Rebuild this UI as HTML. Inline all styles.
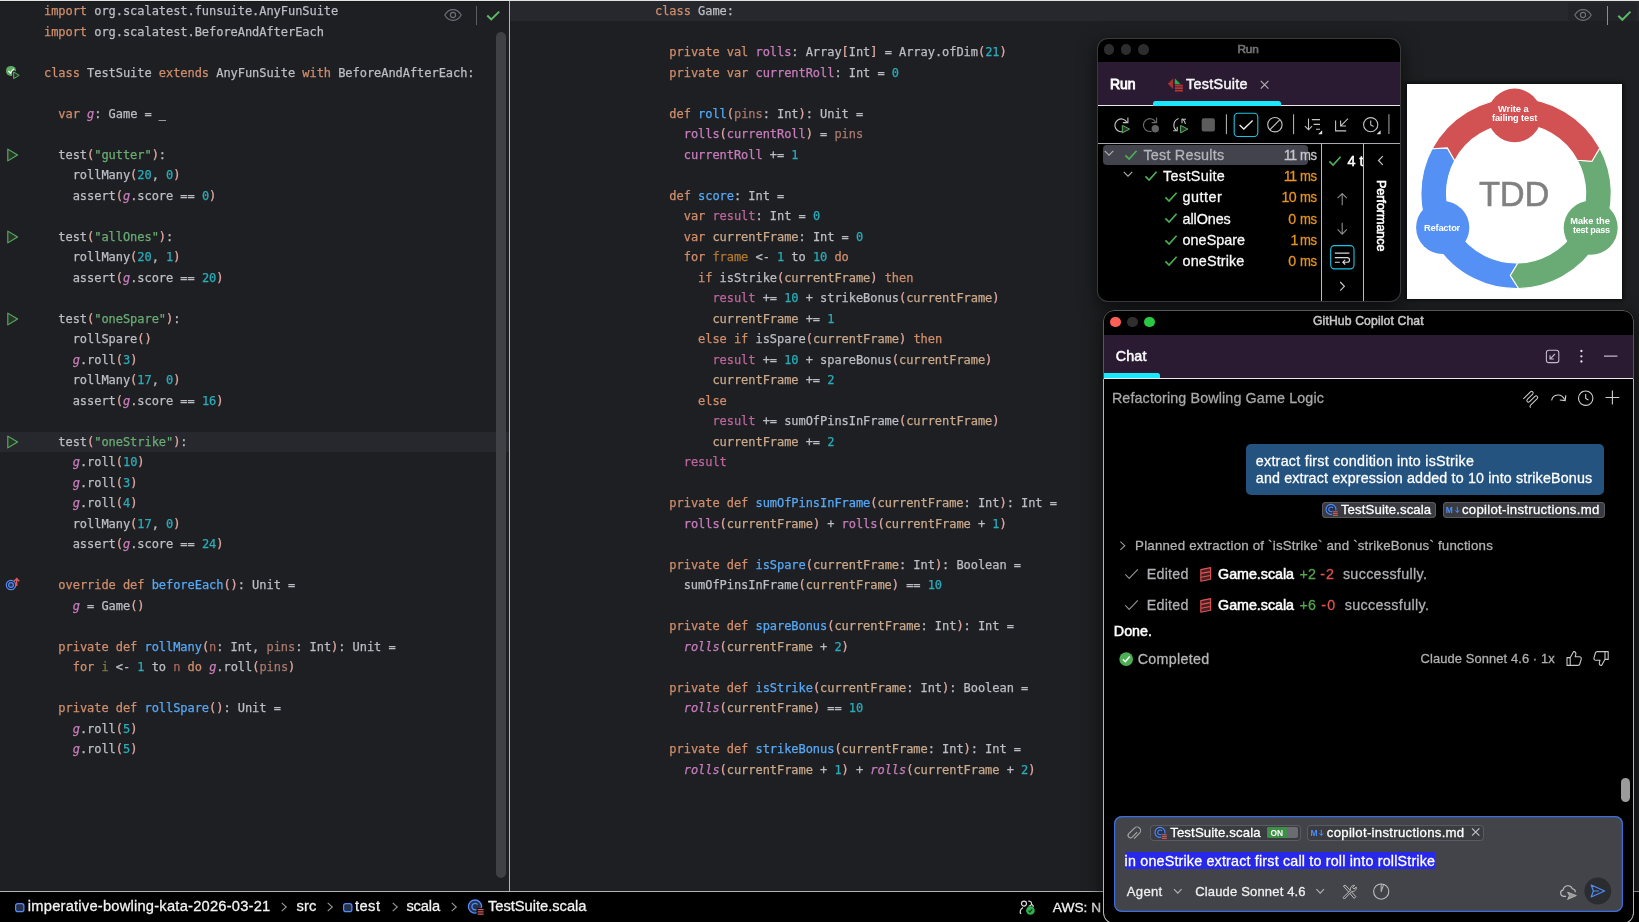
<!DOCTYPE html>
<html lang="en"><head><meta charset="utf-8"><title>imperative-bowling-kata – TestSuite.scala</title>
<style>
html,body{margin:0;padding:0}
body{width:1639px;height:922px;overflow:hidden;background:#1e1f22;position:relative;font-family:'Liberation Sans',sans-serif}
.abs,.t,svg.ic{position:absolute}
.t{white-space:pre;display:block;-webkit-text-stroke:0.28px}
.code{position:absolute;font:12px/20.5px 'DejaVu Sans Mono','Liberation Mono',monospace;letter-spacing:-0.05px;color:#bcbec4;white-space:pre;-webkit-text-stroke:0.25px}
.code .ln{height:20.5px}
.code i{font-style:normal}
.code .k{color:#cf8e6d}.code .s{color:#6aab73}.code .n{color:#2aacb8}.code .f{color:#56a8f5}
.code .m{color:#c77dbb}.code .mi{color:#c77dbb;font-style:italic}.code .p{color:#e0a9a3}
.code .vp{color:#a9796d}.code .vn{color:#a9695e}.code .vi{color:#807a3c}
.code .vr{color:#bd669c}.code .vc{color:#c9a98c}.code .vf{color:#b07a2e}
#root{position:absolute;left:0;top:0;width:1639px;height:922px;overflow:hidden;will-change:transform}
</style></head><body><div id="root">
<div class="abs" style="left:0;top:0;width:1639px;height:1px;background:#e4e4e4"></div>
<div class="abs" style="left:0;top:1px;width:1639px;height:1px;background:#141517;opacity:.6"></div>
<div class="abs" style="left:0;top:431.5px;width:509px;height:20.5px;background:#26282e"></div>
<div class="code" style="left:44px;top:1.3px"><div class="ln"><i class="k">import</i> org.scalatest.funsuite.AnyFunSuite</div><div class="ln"><i class="k">import</i> org.scalatest.BeforeAndAfterEach</div><div class="ln">&nbsp;</div><div class="ln"><i class="k">class</i> TestSuite <i class="k">extends</i> AnyFunSuite <i class="k">with</i> BeforeAndAfterEach:</div><div class="ln">&nbsp;</div><div class="ln">  <i class="k">var</i> <i class="mi">g</i>: Game = _</div><div class="ln">&nbsp;</div><div class="ln">  test<i class="p">(</i><i class="s">&quot;gutter&quot;</i><i class="p">)</i>:</div><div class="ln">    rollMany<i class="p">(</i><i class="n">20</i>, <i class="n">0</i><i class="p">)</i></div><div class="ln">    assert<i class="p">(</i><i class="mi">g</i>.score == <i class="n">0</i><i class="p">)</i></div><div class="ln">&nbsp;</div><div class="ln">  test<i class="p">(</i><i class="s">&quot;allOnes&quot;</i><i class="p">)</i>:</div><div class="ln">    rollMany<i class="p">(</i><i class="n">20</i>, <i class="n">1</i><i class="p">)</i></div><div class="ln">    assert<i class="p">(</i><i class="mi">g</i>.score == <i class="n">20</i><i class="p">)</i></div><div class="ln">&nbsp;</div><div class="ln">  test<i class="p">(</i><i class="s">&quot;oneSpare&quot;</i><i class="p">)</i>:</div><div class="ln">    rollSpare<i class="p">()</i></div><div class="ln">    <i class="mi">g</i>.roll<i class="p">(</i><i class="n">3</i><i class="p">)</i></div><div class="ln">    rollMany<i class="p">(</i><i class="n">17</i>, <i class="n">0</i><i class="p">)</i></div><div class="ln">    assert<i class="p">(</i><i class="mi">g</i>.score == <i class="n">16</i><i class="p">)</i></div><div class="ln">&nbsp;</div><div class="ln">  test<i class="p">(</i><i class="s">&quot;oneStrike&quot;</i><i class="p">)</i>:</div><div class="ln">    <i class="mi">g</i>.roll<i class="p">(</i><i class="n">10</i><i class="p">)</i></div><div class="ln">    <i class="mi">g</i>.roll<i class="p">(</i><i class="n">3</i><i class="p">)</i></div><div class="ln">    <i class="mi">g</i>.roll<i class="p">(</i><i class="n">4</i><i class="p">)</i></div><div class="ln">    rollMany<i class="p">(</i><i class="n">17</i>, <i class="n">0</i><i class="p">)</i></div><div class="ln">    assert<i class="p">(</i><i class="mi">g</i>.score == <i class="n">24</i><i class="p">)</i></div><div class="ln">&nbsp;</div><div class="ln">  <i class="k">override def</i> <i class="f">beforeEach</i><i class="p">()</i>: Unit =</div><div class="ln">    <i class="mi">g</i> = Game<i class="p">()</i></div><div class="ln">&nbsp;</div><div class="ln">  <i class="k">private def</i> <i class="f">rollMany</i><i class="p">(</i><i class="vn">n</i>: Int, <i class="vp">pins</i>: Int<i class="p">)</i>: Unit =</div><div class="ln">    <i class="k">for</i> <i class="vi">i</i> &lt;- <i class="n">1</i> to <i class="vn">n</i> <i class="k">do</i> <i class="mi">g</i>.roll<i class="p">(</i><i class="vp">pins</i><i class="p">)</i></div><div class="ln">&nbsp;</div><div class="ln">  <i class="k">private def</i> <i class="f">rollSpare</i><i class="p">()</i>: Unit =</div><div class="ln">    <i class="mi">g</i>.roll<i class="p">(</i><i class="n">5</i><i class="p">)</i></div><div class="ln">    <i class="mi">g</i>.roll<i class="p">(</i><i class="n">5</i><i class="p">)</i></div></div>
<svg class="ic" style="left:5px;top:145.75px" width="16" height="18" viewBox="0 0 16 18"><path d="M2.8 3.1L12.6 9L2.8 14.9Z" fill="#253627" stroke="#5fad65" stroke-width="1.1" stroke-linejoin="round"/></svg>
<svg class="ic" style="left:5px;top:227.75px" width="16" height="18" viewBox="0 0 16 18"><path d="M2.8 3.1L12.6 9L2.8 14.9Z" fill="#253627" stroke="#5fad65" stroke-width="1.1" stroke-linejoin="round"/></svg>
<svg class="ic" style="left:5px;top:309.75px" width="16" height="18" viewBox="0 0 16 18"><path d="M2.8 3.1L12.6 9L2.8 14.9Z" fill="#253627" stroke="#5fad65" stroke-width="1.1" stroke-linejoin="round"/></svg>
<svg class="ic" style="left:5px;top:432.75px" width="16" height="18" viewBox="0 0 16 18"><path d="M2.8 3.1L12.6 9L2.8 14.9Z" fill="#253627" stroke="#5fad65" stroke-width="1.1" stroke-linejoin="round"/></svg>
<svg class="ic" style="left:4px;top:62.75px" width="20" height="20" viewBox="0 0 20 20"><circle cx="7" cy="7.9" r="5" fill="#5fad65"/><path d="M4.4 7.9L6.5 10L9.8 5.8" fill="none" stroke="#fff" stroke-width="1.3"/><path d="M9.6 8.9L15.2 12.3L9.6 15.7Z" fill="#1e1f22" stroke="#1e1f22" stroke-width="3" stroke-linejoin="round"/><path d="M9.6 8.9L15.2 12.3L9.6 15.7Z" fill="#253627" stroke="#5fad65" stroke-width="1" stroke-linejoin="round"/></svg>
<svg class="ic" style="left:2px;top:575.25px" width="22" height="20" viewBox="0 0 22 20" fill="none"><circle cx="9" cy="10" r="4.7" stroke="#548af7" stroke-width="1.2"/><circle cx="9" cy="10" r="2.4" stroke="#548af7" stroke-width="1.2" fill="#25324d"/><path d="M14.7 11V4.2M12.2 6.3L14.7 3.6L17.2 6.3" stroke="#db5c5c" stroke-width="1.4" fill="none"/></svg>
<div class="abs" style="left:496px;top:31.5px;width:10px;height:846px;border-radius:5px;background:#404144"></div>
<svg class="ic" style="left:442.6px;top:7.199999999999999px" width="20" height="16" viewBox="-10 -8 20 16" fill="none" stroke="#6e7178" stroke-width="1.1"><path d="M-8.2 0C-6.2-3.6-3.3-5.4 0-5.4S6.2-3.6 8.2 0C6.2 3.6 3.3 5.4 0 5.4S-6.2 3.6-8.2 0Z"/><circle r="2.6"/></svg>
<div class="abs" style="left:476px;top:6px;width:1.4px;height:19px;background:#5b5d63"></div>
<svg class="ic" style="left:485.3px;top:9.2px" width="16.5" height="13" viewBox="-2 -2 16.5 13" fill="none" stroke="#5fb865" stroke-width="2" stroke-linecap="butt" stroke-linejoin="miter"><path d="M0.3 4.50L4.25 8.40L12.20 0.6"/></svg>
<div class="abs" style="left:508.8px;top:1px;width:1.3px;height:890px;background:#b2b2b2"></div>
<div class="abs" style="left:510px;top:1px;width:1129px;height:19.7px;background:#26282e"></div>
<div class="abs" style="left:1568px;top:3px;width:69px;height:18px;background:#222328;border-radius:3px"></div>
<div class="code" style="left:655px;top:1.3px"><div class="ln"><i class="k">class</i> Game:</div><div class="ln">&nbsp;</div><div class="ln">  <i class="k">private val</i> <i class="m">rolls</i>: Array<i class="p">[</i>Int<i class="p">]</i> = Array.ofDim<i class="p">(</i><i class="n">21</i><i class="p">)</i></div><div class="ln">  <i class="k">private var</i> <i class="m">currentRoll</i>: Int = <i class="n">0</i></div><div class="ln">&nbsp;</div><div class="ln">  <i class="k">def</i> <i class="f">roll</i><i class="p">(</i><i class="vp">pins</i>: Int<i class="p">)</i>: Unit =</div><div class="ln">    <i class="m">rolls</i><i class="p">(</i><i class="m">currentRoll</i><i class="p">)</i> = <i class="vp">pins</i></div><div class="ln">    <i class="m">currentRoll</i> += <i class="n">1</i></div><div class="ln">&nbsp;</div><div class="ln">  <i class="k">def</i> <i class="f">score</i>: Int =</div><div class="ln">    <i class="k">var</i> <i class="vr">result</i>: Int = <i class="n">0</i></div><div class="ln">    <i class="k">var</i> <i class="vc">currentFrame</i>: Int = <i class="n">0</i></div><div class="ln">    <i class="k">for</i> <i class="vf">frame</i> &lt;- <i class="n">1</i> to <i class="n">10</i> <i class="k">do</i></div><div class="ln">      <i class="k">if</i> isStrike<i class="p">(</i><i class="vc">currentFrame</i><i class="p">)</i> <i class="k">then</i></div><div class="ln">        <i class="vr">result</i> += <i class="n">10</i> + strikeBonus<i class="p">(</i><i class="vc">currentFrame</i><i class="p">)</i></div><div class="ln">        <i class="vc">currentFrame</i> += <i class="n">1</i></div><div class="ln">      <i class="k">else if</i> isSpare<i class="p">(</i><i class="vc">currentFrame</i><i class="p">)</i> <i class="k">then</i></div><div class="ln">        <i class="vr">result</i> += <i class="n">10</i> + spareBonus<i class="p">(</i><i class="vc">currentFrame</i><i class="p">)</i></div><div class="ln">        <i class="vc">currentFrame</i> += <i class="n">2</i></div><div class="ln">      <i class="k">else</i></div><div class="ln">        <i class="vr">result</i> += sumOfPinsInFrame<i class="p">(</i><i class="vc">currentFrame</i><i class="p">)</i></div><div class="ln">        <i class="vc">currentFrame</i> += <i class="n">2</i></div><div class="ln">    <i class="vr">result</i></div><div class="ln">&nbsp;</div><div class="ln">  <i class="k">private def</i> <i class="f">sumOfPinsInFrame</i><i class="p">(</i><i class="vc">currentFrame</i>: Int<i class="p">)</i>: Int =</div><div class="ln">    <i class="m">rolls</i><i class="p">(</i><i class="vc">currentFrame</i><i class="p">)</i> + <i class="m">rolls</i><i class="p">(</i><i class="vc">currentFrame</i> + <i class="n">1</i><i class="p">)</i></div><div class="ln">&nbsp;</div><div class="ln">  <i class="k">private def</i> <i class="f">isSpare</i><i class="p">(</i><i class="vc">currentFrame</i>: Int<i class="p">)</i>: Boolean =</div><div class="ln">    sumOfPinsInFrame<i class="p">(</i><i class="vc">currentFrame</i><i class="p">)</i> == <i class="n">10</i></div><div class="ln">&nbsp;</div><div class="ln">  <i class="k">private def</i> <i class="f">spareBonus</i><i class="p">(</i><i class="vc">currentFrame</i>: Int<i class="p">)</i>: Int =</div><div class="ln">    <i class="mi">rolls</i><i class="p">(</i><i class="vc">currentFrame</i> + <i class="n">2</i><i class="p">)</i></div><div class="ln">&nbsp;</div><div class="ln">  <i class="k">private def</i> <i class="f">isStrike</i><i class="p">(</i><i class="vc">currentFrame</i>: Int<i class="p">)</i>: Boolean =</div><div class="ln">    <i class="mi">rolls</i><i class="p">(</i><i class="vc">currentFrame</i><i class="p">)</i> == <i class="n">10</i></div><div class="ln">&nbsp;</div><div class="ln">  <i class="k">private def</i> <i class="f">strikeBonus</i><i class="p">(</i><i class="vc">currentFrame</i>: Int<i class="p">)</i>: Int =</div><div class="ln">    <i class="mi">rolls</i><i class="p">(</i><i class="vc">currentFrame</i> + <i class="n">1</i><i class="p">)</i> + <i class="mi">rolls</i><i class="p">(</i><i class="vc">currentFrame</i> + <i class="n">2</i><i class="p">)</i></div></div>
<svg class="ic" style="left:1573.3px;top:7.300000000000001px" width="20" height="16" viewBox="-10 -8 20 16" fill="none" stroke="#6e7178" stroke-width="1.1"><path d="M-8.2 0C-6.2-3.6-3.3-5.4 0-5.4S6.2-3.6 8.2 0C6.2 3.6 3.3 5.4 0 5.4S-6.2 3.6-8.2 0Z"/><circle r="2.6"/></svg>
<div class="abs" style="left:1607px;top:6px;width:1.4px;height:19px;background:#8b8d92"></div>
<svg class="ic" style="left:1615.8px;top:8.8px" width="16.8" height="13.4" viewBox="-2 -2 16.8 13.4" fill="none" stroke="#5fb865" stroke-width="2" stroke-linecap="butt" stroke-linejoin="miter"><path d="M0.3 4.70L4.35 8.80L12.50 0.6"/></svg>
<div class="abs" style="left:0;top:891px;width:1639px;height:31px;background:#000"></div>
<div class="abs" style="left:0;top:891px;width:1639px;height:1px;background:#b4b4b4"></div>
<svg class="ic" style="left:14px;top:902px" width="12" height="12" viewBox="-1 -1 12 12"><rect x="0.6" y="0.6" width="8.3" height="8.0" rx="2.2" fill="#25324d" stroke="#548af7" stroke-width="1.2"/></svg>
<span class="t" style="left:27.80px;top:898.00px;font:normal 14.7px 'Liberation Sans', sans-serif;line-height:16px;letter-spacing:0.223px;color:#f2f2f2;">imperative-bowling-kata-2026-03-21</span>
<svg class="ic" style="left:278px;top:900px" width="12" height="14" viewBox="-6 -7 12 14" fill="none" stroke="#9a9a9a" stroke-width="1.1"><path d="M-2.3 -4.2L2.3 0L-2.3 4.2"/></svg>
<span class="t" style="left:296.40px;top:898.00px;font:normal 14.7px 'Liberation Sans', sans-serif;line-height:16px;letter-spacing:0.169px;color:#f2f2f2;">src</span>
<svg class="ic" style="left:324px;top:900px" width="12" height="14" viewBox="-6 -7 12 14" fill="none" stroke="#9a9a9a" stroke-width="1.1"><path d="M-2.3 -4.2L2.3 0L-2.3 4.2"/></svg>
<svg class="ic" style="left:341.5px;top:902px" width="12" height="12" viewBox="-1 -1 12 12"><rect x="0.6" y="0.6" width="8.3" height="8.0" rx="2.2" fill="#25324d" stroke="#548af7" stroke-width="1.2"/></svg>
<span class="t" style="left:354.90px;top:898.00px;font:normal 14.7px 'Liberation Sans', sans-serif;line-height:16px;letter-spacing:0.478px;color:#f2f2f2;">test</span>
<svg class="ic" style="left:389px;top:900px" width="12" height="14" viewBox="-6 -7 12 14" fill="none" stroke="#9a9a9a" stroke-width="1.1"><path d="M-2.3 -4.2L2.3 0L-2.3 4.2"/></svg>
<span class="t" style="left:406.40px;top:898.00px;font:normal 14.7px 'Liberation Sans', sans-serif;line-height:16px;letter-spacing:-0.139px;color:#f2f2f2;">scala</span>
<svg class="ic" style="left:447.5px;top:900px" width="12" height="14" viewBox="-6 -7 12 14" fill="none" stroke="#9a9a9a" stroke-width="1.1"><path d="M-2.3 -4.2L2.3 0L-2.3 4.2"/></svg>
<svg class="ic" style="left:467.3px;top:898.2px" width="18" height="18" viewBox="0 0 18 18" fill="none"><circle cx="8" cy="8.6" r="6.6" stroke="#548af7" stroke-width="1.3" fill="#25324d"/><path d="M10.6 6.6A3.2 3.2 0 1 0 10.6 10.6" stroke="#548af7" stroke-width="1.3"/><rect x="9.6" y="10.2" width="8" height="7.4" fill="#000"/><path d="M10.6 11.6H16.6M10.6 13.9H16.6M10.6 16.2H16.6" stroke="#db5c5c" stroke-width="1.3"/></svg>
<span class="t" style="left:487.90px;top:898.00px;font:normal 14.7px 'Liberation Sans', sans-serif;line-height:16px;letter-spacing:-0.012px;color:#f2f2f2;">TestSuite.scala</span>
<svg class="ic" style="left:1018px;top:898px" width="20" height="18" viewBox="0 0 20 18" fill="none" stroke="#dcdcdc" stroke-width="1.2"><circle cx="6" cy="5.6" r="2.5"/><path d="M10.2 3.2A2.5 2.5 0 1 1 10.6 8"/><path d="M3 16C1.4 14 2.2 11 5 9.6"/><path d="M13.6 6.2C15 7 15.4 8 15.2 9"/><circle cx="12.4" cy="12.5" r="4.3" fill="#2fb350" stroke="none"/><path d="M10.5 12.6L11.9 14L14.3 11.2" stroke="#0a3d18" stroke-width="1.2"/></svg>
<span class="t" style="left:1052.80px;top:900.00px;font:normal 13.7px 'Liberation Sans', sans-serif;line-height:15px;letter-spacing:0.038px;color:#f2f2f2;">AWS: N</span>
<div class="abs" style="left:1098px;top:38.6px;width:302px;height:262px;border-radius:10px;overflow:hidden;background:#000;box-shadow:0 0 0 1px #3a3a3c,0 6px 18px 2px rgba(0,0,0,.55);"><div class="abs" style="left:-1098px;top:-38.6px;width:1639px;height:922px">
<div class="abs" style="left:1103.9px;top:44.1px;width:10.6px;height:10.6px;background:#2d2d2d;border-radius:50%"></div>
<div class="abs" style="left:1120.9px;top:44.1px;width:10.6px;height:10.6px;background:#2d2d2d;border-radius:50%"></div>
<div class="abs" style="left:1138.1000000000001px;top:44.1px;width:10.6px;height:10.6px;background:#2d2d2d;border-radius:50%"></div>
<span class="t" style="left:1237.40px;top:42.00px;font:normal 11.8px 'Liberation Sans', sans-serif;line-height:14px;letter-spacing:-0.152px;color:#707070;-webkit-text-stroke:0.7px;">Run</span>
<div class="abs" style="left:1098px;top:62px;width:302px;height:43.2px;background:#2a1b33;"></div>
<div class="abs" style="left:1098px;top:105px;width:302px;height:1px;background:#e6e6e6;"></div>
<div class="abs" style="left:1153px;top:100.6px;width:128.2px;height:5px;background:#1be7fa;border-radius:2.5px 2.5px 0 0"></div>
<span class="t" style="left:1109.90px;top:76.00px;font:normal 14.0px 'Liberation Sans', sans-serif;line-height:16px;letter-spacing:0.004px;color:#fff;-webkit-text-stroke:0.85px;">Run</span>
<svg class="ic" style="left:1166px;top:76px" width="19" height="18" viewBox="1166 76 19 18" fill="none" ><path d="M1167.8 83.8L1173.1 78.6V89Z" fill="#a83232"/><path d="M1174.8 78.3L1180.6 84.2H1174.8Z" fill="#2fa84f"/><path d="M1174.9 85.7H1182.9M1174.9 88.2H1182.9M1174.9 90.7H1182.9" stroke="#b73737" stroke-width="1.7"/></svg>
<span class="t" style="left:1186.00px;top:76.00px;font:normal 14.4px 'Liberation Sans', sans-serif;line-height:16px;letter-spacing:0.300px;color:#f8f8f8;-webkit-text-stroke:0.45px;">TestSuite</span>
<svg class="ic" style="left:1259px;top:79px" width="12" height="12" viewBox="1259 79 12 12" fill="none" ><path d="M1260.8 80.9L1268.4 88.7M1268.4 80.9L1260.8 88.7" stroke="#b4b4b4" stroke-width="1.1"/></svg>
<svg class="ic" style="left:1098px;top:106px" width="302" height="38" viewBox="1098 106 302 38" fill="none" ><path d="M1124.3 131A6.4 6.4 0 1 1 1126.9 122.2" stroke="#c4c4c4" stroke-width="1.1"/><path d="M1127.9 117.6V122.6H1122.9" stroke="#c4c4c4" stroke-width="1.1"/><path d="M1122.3 125.4L1129.6 129.1L1122.3 132.8Z" fill="#253627" stroke="#5fad65" stroke-width="1" stroke-linejoin="round"/><path d="M1151.6 131.2A6.4 6.4 0 1 1 1155.6 122.2" stroke="#6c6c6c" stroke-width="1.1"/><path d="M1156.6 117.6V122.6H1151.6" stroke="#6c6c6c" stroke-width="1.1"/><circle cx="1155.3" cy="128.7" r="3.7" fill="#626262"/><path d="M1178.6 118.6A7 7 0 0 0 1176.4 130.6" stroke="#c4c4c4" stroke-width="1.1"/><path d="M1173.2 130.8H1177.2V126.8" stroke="#c4c4c4" stroke-width="1.1"/><path d="M1182.2 118.9A7 7 0 0 1 1185.4 124" stroke="#c4c4c4" stroke-width="1.1"/><path d="M1186 119.2H1182V123.2" stroke="#c4c4c4" stroke-width="1.1"/><path d="M1180.6 125.4L1187.9 129.1L1180.6 132.8Z" fill="#253627" stroke="#5fad65" stroke-width="1" stroke-linejoin="round"/><rect x="1201.7" y="118.2" width="13.2" height="13.2" rx="2" fill="#5c5c5c"/><path d="M1226.4 114.3V134.1M1293.6 114.3V134.1" stroke="#bdbdbd" stroke-width="1"/><path d="M1388.9 114.3V134.1" stroke="#6a6a6a" stroke-width="1.6"/><rect x="1234.2" y="113.3" width="23.6" height="23.2" rx="3.6" stroke="#17c6e4" stroke-width="1.1"/><path d="M1239.6 125L1243.8 129L1252.6 120.5" stroke="#f2f2f2" stroke-width="1.3"/><circle cx="1274.9" cy="124.7" r="7.2" stroke="#c4c4c4" stroke-width="1.1"/><path d="M1269.8 129.8L1280 119.6" stroke="#c4c4c4" stroke-width="1.1"/><path d="M1308.5 118.6V129.6M1304.9 126.2L1308.5 129.8L1312.1 126.2M1311.8 119.6H1320M1313.6 124.4H1320M1316 129.2H1320" stroke="#c4c4c4" stroke-width="1.1"/><path d="M1322.2 130.2V134.2H1318.2Z" fill="#e0e0e0"/><path d="M1335.6 120.4V130.9H1346.2M1348 118.6L1340.8 125.8M1340.6 120.6V126H1346" stroke="#c4c4c4" stroke-width="1.1"/><circle cx="1370.7" cy="124.7" r="7.1" stroke="#c4c4c4" stroke-width="1.1"/><path d="M1370.7 120.4V124.9L1373.6 126.5" stroke="#c4c4c4" stroke-width="1.1"/><path d="M1380.6 130.2V134.2H1376.6Z" fill="#e0e0e0"/></svg>
<div class="abs" style="left:1098px;top:143px;width:302px;height:1px;background:#a9a9b0;"></div>
<div class="abs" style="left:1102.6px;top:144.8px;width:205.8px;height:19.8px;background:#43434d;border-radius:4px"></div>
<span class="t" style="left:1143.40px;top:147.00px;font:normal 14.4px 'Liberation Sans', sans-serif;line-height:16px;letter-spacing:0.210px;color:#b4b4bc;">Test Results</span>
<svg class="ic" style="left:1124.3px;top:147.6px" width="15" height="14" viewBox="1124.3 147.6 15 14" fill="none" ><path d="M1125.7 155.0L1129.3999999999999 158.6L1136.8999999999999 150.4" stroke="#4caf54" stroke-width="1.7"/></svg>
<span class="t" style="left:1283.80px;top:147.00px;font:normal 14.2px 'Liberation Sans', sans-serif;line-height:16px;letter-spacing:-1.267px;color:#c8c8d0;">11</span>
<span class="t" style="left:1299.60px;top:147.00px;font:normal 14.2px 'Liberation Sans', sans-serif;line-height:16px;letter-spacing:-0.300px;color:#c8c8d0;transform-origin:0 50%;transform:scaleX(0.9224);">ms</span>
<svg class="ic" style="left:1102.6px;top:148.1px" width="12" height="10" viewBox="1102.6 148.1 12 10" fill="none" ><path d="M1104.3 151.0L1108.6 155.29999999999998L1112.8999999999999 151.0" stroke="#b0b0b0" stroke-width="1.1"/></svg>
<span class="t" style="left:1163.00px;top:168.00px;font:normal 14.4px 'Liberation Sans', sans-serif;line-height:16px;letter-spacing:0.333px;color:#fafafa;">TestSuite</span>
<svg class="ic" style="left:1143.7px;top:168.6px" width="15" height="14" viewBox="1143.7 168.6 15 14" fill="none" ><path d="M1145.1000000000001 176.0L1148.8 179.6L1156.3 171.4" stroke="#4caf54" stroke-width="1.7"/></svg>
<span class="t" style="left:1283.80px;top:168.00px;font:normal 14.2px 'Liberation Sans', sans-serif;line-height:16px;letter-spacing:-1.267px;color:#e7951f;">11</span>
<span class="t" style="left:1299.60px;top:168.00px;font:normal 14.2px 'Liberation Sans', sans-serif;line-height:16px;letter-spacing:-0.300px;color:#e7951f;transform-origin:0 50%;transform:scaleX(0.9224);">ms</span>
<svg class="ic" style="left:1122.1px;top:169.1px" width="12" height="10" viewBox="1122.1 169.1 12 10" fill="none" ><path d="M1123.8 172.0L1128.1 176.29999999999998L1132.3999999999999 172.0" stroke="#b0b0b0" stroke-width="1.1"/></svg>
<span class="t" style="left:1182.60px;top:189.00px;font:normal 14.4px 'Liberation Sans', sans-serif;line-height:16px;letter-spacing:0.465px;color:#fafafa;">gutter</span>
<svg class="ic" style="left:1163.7px;top:189.9px" width="15" height="14" viewBox="1163.7 189.9 15 14" fill="none" ><path d="M1165.1000000000001 197.3L1168.8 200.9L1176.3 192.70000000000002" stroke="#4caf54" stroke-width="1.7"/></svg>
<span class="t" style="left:1281.50px;top:189.00px;font:normal 14.2px 'Liberation Sans', sans-serif;line-height:16px;letter-spacing:-0.641px;color:#e7951f;">10</span>
<span class="t" style="left:1299.60px;top:189.00px;font:normal 14.2px 'Liberation Sans', sans-serif;line-height:16px;letter-spacing:-0.300px;color:#e7951f;transform-origin:0 50%;transform:scaleX(0.9224);">ms</span>
<span class="t" style="left:1182.60px;top:211.00px;font:normal 14.4px 'Liberation Sans', sans-serif;line-height:16px;letter-spacing:-0.100px;color:#fafafa;">allOnes</span>
<svg class="ic" style="left:1163.7px;top:211.4px" width="15" height="14" viewBox="1163.7 211.4 15 14" fill="none" ><path d="M1165.1000000000001 218.8L1168.8 222.4L1176.3 214.20000000000002" stroke="#4caf54" stroke-width="1.7"/></svg>
<span class="t" style="left:1288.30px;top:211.00px;font:normal 14.2px 'Liberation Sans', sans-serif;line-height:16px;letter-spacing:0.000px;color:#e7951f;">0</span>
<span class="t" style="left:1299.60px;top:211.00px;font:normal 14.2px 'Liberation Sans', sans-serif;line-height:16px;letter-spacing:-0.300px;color:#e7951f;transform-origin:0 50%;transform:scaleX(0.9224);">ms</span>
<span class="t" style="left:1182.60px;top:232.00px;font:normal 14.4px 'Liberation Sans', sans-serif;line-height:16px;letter-spacing:0.010px;color:#fafafa;">oneSpare</span>
<svg class="ic" style="left:1163.7px;top:232.6px" width="15" height="14" viewBox="1163.7 232.6 15 14" fill="none" ><path d="M1165.1000000000001 240.0L1168.8 243.6L1176.3 235.4" stroke="#4caf54" stroke-width="1.7"/></svg>
<span class="t" style="left:1290.40px;top:232.00px;font:normal 14.2px 'Liberation Sans', sans-serif;line-height:16px;letter-spacing:0.000px;color:#e7951f;">1</span>
<span class="t" style="left:1299.60px;top:232.00px;font:normal 14.2px 'Liberation Sans', sans-serif;line-height:16px;letter-spacing:-0.300px;color:#e7951f;transform-origin:0 50%;transform:scaleX(0.9224);">ms</span>
<span class="t" style="left:1182.60px;top:253.00px;font:normal 14.4px 'Liberation Sans', sans-serif;line-height:16px;letter-spacing:0.123px;color:#fafafa;">oneStrike</span>
<svg class="ic" style="left:1163.7px;top:253.8px" width="15" height="14" viewBox="1163.7 253.8 15 14" fill="none" ><path d="M1165.1000000000001 261.2L1168.8 264.8L1176.3 256.6" stroke="#4caf54" stroke-width="1.7"/></svg>
<span class="t" style="left:1288.30px;top:253.00px;font:normal 14.2px 'Liberation Sans', sans-serif;line-height:16px;letter-spacing:0.000px;color:#e7951f;">0</span>
<span class="t" style="left:1299.60px;top:253.00px;font:normal 14.2px 'Liberation Sans', sans-serif;line-height:16px;letter-spacing:-0.300px;color:#e7951f;transform-origin:0 50%;transform:scaleX(0.9224);">ms</span>
<div class="abs" style="left:1321.2px;top:143px;width:1px;height:158px;background:#bdbdbd;"></div>
<div class="abs" style="left:1362.8px;top:143px;width:1px;height:158px;background:#bdbdbd;"></div>
<div class="abs" style="left:1322.2px;top:144px;width:40.6px;height:157px;overflow:hidden"><div class="abs" style="left:-1322.2px;top:-144px;width:1639px;height:922px">
<svg class="ic" style="left:1328.4px;top:153.8px" width="15" height="14" viewBox="1328.4 153.8 15 14" fill="none" ><path d="M1329.8000000000002 161.20000000000002L1333.5 164.8L1341.0 156.60000000000002" stroke="#4caf54" stroke-width="1.7"/></svg>
<span class="t" style="left:1347.60px;top:153.00px;font:normal 14.4px 'Liberation Sans', sans-serif;line-height:16px;letter-spacing:0.000px;color:#fff;-webkit-text-stroke:0.5px;">4 tests</span>
</div></div>
<svg class="ic" style="left:1322px;top:144px" width="78" height="157" viewBox="1322 144 78 157" fill="none" ><path d="M1342.2 205.3V193.6M1337.6 198.2L1342.2 193.5L1346.8 198.2" stroke="#8c8c8c" stroke-width="1.1"/><path d="M1342.2 222.8V234M1337.6 229.4L1342.2 234.1L1346.8 229.4" stroke="#8c8c8c" stroke-width="1.1"/><rect x="1330.7" y="245.6" width="23.3" height="23.3" rx="3.8" stroke="#17c6e4" stroke-width="1.1"/><path d="M1334.8 253.1H1349.4M1334.8 257.6H1347.2A2.3 2.3 0 0 1 1347.2 262.2H1343M1345.2 259.9L1342.8 262.2L1345.2 264.5M1334.8 262.2H1339.8" stroke="#d8d8d8" stroke-width="1.1"/><path d="M1340.2 282L1344.4 286.3L1340.2 290.6" stroke="#d0d0d0" stroke-width="1.1"/><path d="M1382.8 156.2L1378.5 160.5L1382.8 164.8" stroke="#d0d0d0" stroke-width="1.1"/></svg>
<span class="t" style="left:1381.4px;top:179.6px;font:normal 12.6px 'Liberation Sans', sans-serif;line-height:16px;letter-spacing:-0.055px;color:#fff;-webkit-text-stroke:0.55px;transform-origin:0 0;transform:rotate(90deg) translate(0,-8.3px)">Performance</span>
</div></div>
<div class="abs" style="left:1407.2px;top:84.3px;width:214.8px;height:214.7px;background:#fff;box-shadow:0 0 5px 1px rgba(0,0,0,.75)"></div>
<svg class="ic" style="left:1407.5px;top:84.6px" width="214.6" height="214.4" viewBox="1407.5 84.6 214.6 214.4" fill="none" ><path d="M1518.09 288.17A95.2 95.2 0 0 1 1431.54 148.31L1446.89 147.52L1454.15 160.32A69.6 69.6 0 0 0 1517.42 262.58L1509.85 275.20Z" fill="#5591f5" stroke="#fff" stroke-width="1.1" stroke-linejoin="miter"/><path d="M1599.26 147.57A95.2 95.2 0 0 1 1518.09 288.17L1509.85 275.20L1517.42 262.58A69.6 69.6 0 0 0 1576.77 159.79L1591.45 160.80Z" fill="#6aab75" stroke="#fff" stroke-width="1.1" stroke-linejoin="miter"/><path d="M1431.54 148.31A95.2 95.2 0 0 1 1599.26 147.57L1591.45 160.80L1576.77 159.79A69.6 69.6 0 0 0 1454.15 160.32L1446.89 147.52Z" fill="#d25254" stroke="#fff" stroke-width="1.1" stroke-linejoin="miter"/><circle cx="1514.1" cy="115" r="26.8" fill="#d25254"/><circle cx="1442.2" cy="227.1" r="26.6" fill="#5591f5"/><circle cx="1590.2" cy="227.4" r="27" fill="#6aab75"/></svg>
<span class="t" style="left:1479.30px;top:175.00px;font:normal 34.6px 'Liberation Sans', sans-serif;line-height:38px;letter-spacing:-0.300px;color:#808080;transform-origin:0 50%;transform:scaleX(0.9975);-webkit-text-stroke:0.5px;">TDD</span>
<span class="t" style="left:1497.90px;top:104.00px;font:bold 9.3px 'Liberation Sans', sans-serif;line-height:10px;letter-spacing:0.010px;color:#fff;-webkit-text-stroke:0;">Write a</span>
<span class="t" style="left:1491.90px;top:113.00px;font:bold 9.3px 'Liberation Sans', sans-serif;line-height:10px;letter-spacing:-0.092px;color:#fff;-webkit-text-stroke:0;">failing test</span>
<span class="t" style="left:1424.10px;top:223.00px;font:bold 9.3px 'Liberation Sans', sans-serif;line-height:10px;letter-spacing:-0.227px;color:#fff;-webkit-text-stroke:0;">Refactor</span>
<span class="t" style="left:1570.20px;top:216.00px;font:bold 9.3px 'Liberation Sans', sans-serif;line-height:10px;letter-spacing:0.000px;color:#fff;-webkit-text-stroke:0;">Make the</span>
<span class="t" style="left:1573.20px;top:225.00px;font:bold 9.3px 'Liberation Sans', sans-serif;line-height:10px;letter-spacing:-0.300px;color:#fff;transform-origin:0 50%;transform:scaleX(0.9784);-webkit-text-stroke:0;">test pass</span>
<div class="abs" style="left:1103.1px;top:310px;width:530.7px;height:614px;border-radius:11px;overflow:hidden;background:#000;box-shadow:0 0 0 1px #3a3a3c,0 6px 18px 2px rgba(0,0,0,.55);box-shadow:0 6px 18px 2px rgba(0,0,0,.55);"><div class="abs" style="left:-1103.1px;top:-310px;width:1639px;height:922px">
<div class="abs" style="left:1110.0px;top:316.6px;width:10.8px;height:10.8px;background:#ff5f57;border-radius:50%"></div>
<div class="abs" style="left:1127.0px;top:316.6px;width:10.8px;height:10.8px;background:#2f2f30;border-radius:50%"></div>
<div class="abs" style="left:1144.0px;top:316.6px;width:10.8px;height:10.8px;background:#28c840;border-radius:50%"></div>
<span class="t" style="left:1313.00px;top:314.00px;font:normal 12.2px 'Liberation Sans', sans-serif;line-height:14px;letter-spacing:0.122px;color:#c6c6c6;-webkit-text-stroke:0.5px;">GitHub Copilot Chat</span>
<div class="abs" style="left:1104px;top:335px;width:530px;height:42.6px;background:#2a1b33;"></div>
<div class="abs" style="left:1104px;top:377.8px;width:530px;height:1.4px;background:#ececec;"></div>
<div class="abs" style="left:1104px;top:373.2px;width:55.8px;height:5.2px;background:#1be7fa;border-radius:0 2.5px 0 0"></div>
<span class="t" style="left:1115.80px;top:348.00px;font:normal 14.3px 'Liberation Sans', sans-serif;line-height:16px;letter-spacing:0.124px;color:#fff;-webkit-text-stroke:0.5px;">Chat</span>
<svg class="ic" style="left:1540px;top:345px" width="90" height="24" viewBox="1540 345 90 24" fill="none" ><rect x="1546.4" y="350.2" width="12.4" height="12.4" rx="2.4" stroke="#c3b9cc" stroke-width="1.1"/><path d="M1555 354L1550.2 358.8M1550 355.2V359H1553.8" stroke="#c3b9cc" stroke-width="1.1"/><circle cx="1581.4" cy="351" r="1.15" fill="#e4e4e4"/><circle cx="1581.4" cy="356.3" r="1.15" fill="#e4e4e4"/><circle cx="1581.4" cy="361.5" r="1.15" fill="#e4e4e4"/><path d="M1604 356.1H1617.4" stroke="#c3b9cc" stroke-width="1.2"/></svg>
<div class="abs" style="left:1103.1px;top:310px;width:530.7px;height:614px;background:transparent;border:1px solid #58585a;border-radius:11px;box-sizing:border-box"></div>
<div class="abs" style="left:1103.1px;top:379px;width:530.7px;height:545px;background:transparent;border:1px solid #b4b4b4;border-top:0;border-radius:0 0 11px 11px;box-sizing:border-box"></div>
<span class="t" style="left:1111.90px;top:390.00px;font:normal 14.3px 'Liberation Sans', sans-serif;line-height:16px;letter-spacing:0.129px;color:#a8a8a8;">Refactoring Bowling Game Logic</span>
<svg class="ic" style="left:1518px;top:386px" width="104" height="24" viewBox="1518 386 104 24" fill="none" ><g transform="translate(1531 398) rotate(45)" stroke="#cfcfcf" stroke-width="1" fill="none"><path d="M-4.8 6V-4A1.6 1.6 0 0 1 -1.6 -4V3.6A1.6 1.6 0 0 0 1.6 3.6V-4A1.6 1.6 0 0 1 4.8 -4V5.4A1.8 1.8 0 0 0 6.6 7.2"/><path d="M-3.2 6V-4.4A3.2 3.2 0 0 1 0 -6.6" opacity=".0"/></g><path d="M1551.6 400.4C1553.2 393.6 1561.6 393.2 1564.6 399.6M1565.8 395.2L1565.2 400.6L1559.8 400" stroke="#cfcfcf" stroke-width="1.1"/><circle cx="1585.7" cy="398.2" r="7.2" stroke="#cfcfcf" stroke-width="1.1"/><path d="M1585.7 394V398.4L1588.4 400" stroke="#cfcfcf" stroke-width="1.1"/><path d="M1612.4 390.6V404.4M1605.5 397.5H1619.3" stroke="#cfcfcf" stroke-width="1.1"/></svg>
<div class="abs" style="left:1246px;top:443.8px;width:357.8px;height:51px;background:#245380;border-radius:5px"></div>
<span class="t" style="left:1255.80px;top:453.00px;font:normal 14.3px 'Liberation Sans', sans-serif;line-height:16px;letter-spacing:0.252px;color:#fff;">extract first condition into isStrike</span>
<span class="t" style="left:1255.80px;top:470.00px;font:normal 14.3px 'Liberation Sans', sans-serif;line-height:16px;letter-spacing:0.146px;color:#fff;">and extract expression added to 10 into strikeBonus</span>
<div class="abs" style="left:1322px;top:501.6px;width:114.2px;height:16.6px;background:#3a3b40;border-radius:4px;box-shadow:inset 0 0 0 1px #5a5b61"></div>
<svg class="ic" style="left:1324.8px;top:503.4px" width="14" height="14" viewBox="0 0 14 14" fill="none"><circle cx="6" cy="6.4" r="5" stroke="#548af7" stroke-width="1.1" fill="#25324d"/><path d="M8 4.9A2.4 2.4 0 1 0 8 7.9" stroke="#548af7" stroke-width="1.1"/><rect x="7.3" y="7.6" width="6.4" height="6" fill="#3a3b40"/><path d="M8 8.8H12.8M8 10.6H12.8M8 12.4H12.8" stroke="#db5c5c" stroke-width="1"/></svg>
<span class="t" style="left:1340.90px;top:502.00px;font:normal 13.2px 'Liberation Sans', sans-serif;line-height:15px;letter-spacing:0.113px;color:#fff;">TestSuite.scala</span>
<div class="abs" style="left:1442.8px;top:501.6px;width:161.8px;height:16.6px;background:#3a3b40;border-radius:4px;box-shadow:inset 0 0 0 1px #5a5b61"></div>
<span class="t" style="left:1445.70px;top:505.00px;font:bold 8.5px 'Liberation Sans', sans-serif;line-height:10px;letter-spacing:1.606px;color:#4f8df5;-webkit-text-stroke:0;">M</span><svg class="ic" style="left:1454.6px;top:504.79999999999995px" width="5" height="9" viewBox="1454.6 504.79999999999995 5 9" fill="none" ><path d="M1456.9 506.49999999999994V512.1999999999999M1455 510.19999999999993L1456.9 512.3L1458.8 510.19999999999993" stroke="#4f8df5" stroke-width="1"/></svg>
<span class="t" style="left:1461.90px;top:502.00px;font:normal 13.2px 'Liberation Sans', sans-serif;line-height:15px;letter-spacing:0.282px;color:#fff;">copilot-instructions.md</span>
<svg class="ic" style="left:1116px;top:538px" width="14" height="16" viewBox="1116 538 14 16" fill="none" ><path d="M1120.4 541.6L1124.8 545.7L1120.4 549.8" stroke="#9a9a9a" stroke-width="1.1"/></svg>
<span class="t" style="left:1135.10px;top:538.00px;font:normal 13.3px 'Liberation Sans', sans-serif;line-height:15px;letter-spacing:0.200px;color:#b2b2b2;">Planned extraction of `isStrike` and `strikeBonus` functions</span>
<svg class="ic" style="left:1123px;top:567.2px" width="17" height="14" viewBox="1123 567.2 17 14" fill="none" ><path d="M1125.3 574.6L1129.2 578.5L1137.8 569.6" stroke="#8f8f8f" stroke-width="1.2"/></svg>
<span class="t" style="left:1146.70px;top:566.00px;font:normal 14.3px 'Liberation Sans', sans-serif;line-height:16px;letter-spacing:0.226px;color:#b0b0b4;">Edited</span>
<svg class="ic" style="left:1199.2px;top:566px" width="14" height="17" viewBox="1199.2 566 14 17" fill="none" ><path d="M1201.0 569.6L1210.8 567.6V579.2L1201.0 581.2Z" stroke="#e05555" stroke-width="1.1" fill="#4a1f22" stroke-linejoin="round"/><path d="M1201.2 573.4L1210.6000000000001 571.6M1201.2 577.3L1210.6000000000001 575.5" stroke="#e05555" stroke-width="1.1"/></svg>
<span class="t" style="left:1218.10px;top:566.00px;font:normal 14.3px 'Liberation Sans', sans-serif;line-height:16px;letter-spacing:-0.038px;color:#fff;-webkit-text-stroke:0.5px;">Game.scala</span>
<span class="t" style="left:1299.40px;top:566.00px;font:normal 14.2px 'Liberation Sans', sans-serif;line-height:16px;letter-spacing:0.306px;color:#57a64a;">+2</span>
<span class="t" style="left:1320.20px;top:566.00px;font:normal 14.2px 'Liberation Sans', sans-serif;line-height:16px;letter-spacing:1.088px;color:#e05252;">-2</span>
<span class="t" style="left:1342.90px;top:566.00px;font:normal 14.3px 'Liberation Sans', sans-serif;line-height:16px;letter-spacing:0.332px;color:#b0b0b4;">successfully.</span>
<svg class="ic" style="left:1123px;top:597.8000000000001px" width="17" height="14" viewBox="1123 597.8000000000001 17 14" fill="none" ><path d="M1125.3 605.2L1129.2 609.1L1137.8 600.2" stroke="#8f8f8f" stroke-width="1.2"/></svg>
<span class="t" style="left:1146.70px;top:597.00px;font:normal 14.3px 'Liberation Sans', sans-serif;line-height:16px;letter-spacing:0.226px;color:#b0b0b4;">Edited</span>
<svg class="ic" style="left:1199.2px;top:596.6px" width="14" height="17" viewBox="1199.2 596.6 14 17" fill="none" ><path d="M1201.0 600.2L1210.8 598.2V609.8000000000001L1201.0 611.8000000000001Z" stroke="#e05555" stroke-width="1.1" fill="#4a1f22" stroke-linejoin="round"/><path d="M1201.2 604.0L1210.6000000000001 602.2M1201.2 607.9L1210.6000000000001 606.1" stroke="#e05555" stroke-width="1.1"/></svg>
<span class="t" style="left:1218.10px;top:597.00px;font:normal 14.3px 'Liberation Sans', sans-serif;line-height:16px;letter-spacing:-0.038px;color:#fff;-webkit-text-stroke:0.5px;">Game.scala</span>
<span class="t" style="left:1299.40px;top:597.00px;font:normal 14.2px 'Liberation Sans', sans-serif;line-height:16px;letter-spacing:0.306px;color:#57a64a;">+6</span>
<span class="t" style="left:1321.20px;top:597.00px;font:normal 14.2px 'Liberation Sans', sans-serif;line-height:16px;letter-spacing:1.288px;color:#e05252;">-0</span>
<span class="t" style="left:1344.80px;top:597.00px;font:normal 14.3px 'Liberation Sans', sans-serif;line-height:16px;letter-spacing:0.340px;color:#b0b0b4;">successfully.</span>
<span class="t" style="left:1113.80px;top:623.00px;font:normal 14.3px 'Liberation Sans', sans-serif;line-height:16px;letter-spacing:0.009px;color:#fff;-webkit-text-stroke:0.5px;">Done.</span>
<svg class="ic" style="left:1118px;top:651px" width="17" height="17" viewBox="1118 651 17 17" fill="none" ><circle cx="1126.2" cy="659.1" r="6.9" fill="#4caf54"/><path d="M1122.9 659.3L1125.3 661.7L1129.7 656.6" stroke="#fff" stroke-width="1.5"/></svg>
<span class="t" style="left:1137.70px;top:651.00px;font:normal 14.3px 'Liberation Sans', sans-serif;line-height:16px;letter-spacing:0.307px;color:#b6b6b6;">Completed</span>
<span class="t" style="left:1420.60px;top:651.00px;font:normal 12.9px 'Liberation Sans', sans-serif;line-height:15px;letter-spacing:0.106px;color:#b0b0b0;">Claude Sonnet 4.6 · 1x</span>
<svg class="ic" style="left:1564px;top:648px" width="48" height="21" viewBox="1564 648 48 21" fill="none" ><path d="M1567 657.6H1570.2V665.4H1567ZM1570.2 657.8L1573.6 651.6C1575.4 651.4 1576.2 652.8 1575.8 654.4L1575.2 656.8H1579.4C1580.8 656.8 1581.6 658 1581.2 659.2L1579.8 664C1579.5 665 1578.8 665.4 1578 665.4H1570.2" stroke="#c8c8c8" stroke-width="1.1" stroke-linejoin="round"/><g transform="translate(3202.2 1317) scale(-1 -1)"><path d="M1594 657.6H1597.2V665.4H1594ZM1597.2 657.8L1600.6 651.6C1602.4 651.4 1603.2 652.8 1602.8 654.4L1602.2 656.8H1606.4C1607.8 656.8 1608.6 658 1608.2 659.2L1606.8 664C1606.5 665 1605.8 665.4 1605 665.4H1597.2" stroke="#c8c8c8" stroke-width="1.1" stroke-linejoin="round"/></g></svg>
<div class="abs" style="left:1620.6px;top:778.4px;width:9.2px;height:24px;background:#9b9b9b;border-radius:4.6px"></div>
<div class="abs" style="left:1114.3px;top:816.4px;width:508.5px;height:95.6px;background:#434449;border-radius:8px;box-shadow:inset 0 0 0 1.2px #3a70dc"></div>
<svg class="ic" style="left:1125px;top:824px" width="18" height="18" viewBox="1125 824 18 18" fill="none" ><g transform="translate(1134.2 833.4) rotate(45)"><path d="M2.4 -3.6V3.4A2.4 2.4 0 0 1 -2.4 3.4V-4.6A3.6 3.6 0 0 1 4.8 -4.6V3.2" stroke="#a8a8a8" stroke-width="1.1" transform="translate(-1.2 0.6)"/></g></svg>
<div class="abs" style="left:1149.5px;top:824.6px;width:151.6px;height:16.8px;background:#3b3c41;border-radius:4px;box-shadow:inset 0 0 0 1px #5a5b61"></div>
<svg class="ic" style="left:1154.4px;top:826.4px" width="14" height="14" viewBox="0 0 14 14" fill="none"><circle cx="6" cy="6.4" r="5" stroke="#548af7" stroke-width="1.1" fill="#25324d"/><path d="M8 4.9A2.4 2.4 0 1 0 8 7.9" stroke="#548af7" stroke-width="1.1"/><rect x="7.3" y="7.6" width="6.4" height="6" fill="#3b3c41"/><path d="M8 8.8H12.8M8 10.6H12.8M8 12.4H12.8" stroke="#db5c5c" stroke-width="1"/></svg>
<span class="t" style="left:1170.20px;top:825.00px;font:normal 13.2px 'Liberation Sans', sans-serif;line-height:15px;letter-spacing:0.126px;color:#fff;">TestSuite.scala</span>
<div class="abs" style="left:1266.8px;top:827.4px;width:31px;height:10.4px;background:#6a6c72;border-radius:2px"></div>
<div class="abs" style="left:1266.8px;top:827.4px;width:20.4px;height:10.4px;background:#3f8f49;border-radius:2px 0 0 2px"></div>
<span class="t" style="left:1270.40px;top:828.00px;font:bold 8.4px 'Liberation Sans', sans-serif;line-height:10px;letter-spacing:0.019px;color:#fff;-webkit-text-stroke:0;">ON</span>
<div class="abs" style="left:1306.8px;top:824.6px;width:177.6px;height:16.8px;background:#3b3c41;border-radius:4px;box-shadow:inset 0 0 0 1px #5a5b61"></div>
<span class="t" style="left:1310.50px;top:828.00px;font:bold 8.5px 'Liberation Sans', sans-serif;line-height:10px;letter-spacing:1.606px;color:#4f8df5;-webkit-text-stroke:0;">M</span><svg class="ic" style="left:1319.3999999999999px;top:828.2px" width="5" height="9" viewBox="1319.3999999999999 828.2 5 9" fill="none" ><path d="M1321.7 829.9000000000001V835.6M1319.8 833.6L1321.7 835.7L1323.6 833.6" stroke="#4f8df5" stroke-width="1"/></svg>
<span class="t" style="left:1326.80px;top:825.00px;font:normal 13.2px 'Liberation Sans', sans-serif;line-height:15px;letter-spacing:0.282px;color:#fff;">copilot-instructions.md</span>
<svg class="ic" style="left:1470px;top:826px" width="12" height="12" viewBox="1470 826 12 12" fill="none" ><path d="M1472 828.3L1479.4 835.7M1479.4 828.3L1472 835.7" stroke="#c4c4c4" stroke-width="1.1"/></svg>
<div class="abs" style="left:1124.8px;top:852.2px;width:310.6px;height:16.8px;background:#2828ea;"></div>
<span class="t" style="left:1124.60px;top:853.00px;font:normal 14.3px 'Liberation Sans', sans-serif;line-height:16px;letter-spacing:0.186px;color:#fff;">in oneStrike extract first call to roll into rollStrike</span>
<span class="t" style="left:1126.80px;top:884.00px;font:normal 13.1px 'Liberation Sans', sans-serif;line-height:15px;letter-spacing:0.296px;color:#f0f0f0;">Agent</span>
<svg class="ic" style="left:1172px;top:886px" width="12" height="10" viewBox="1172 886 12 10" fill="none" ><path d="M1174 889.2L1177.8 893.2L1181.6 889.2" stroke="#b4b4b4" stroke-width="1.1"/></svg>
<span class="t" style="left:1195.20px;top:884.00px;font:normal 13.0px 'Liberation Sans', sans-serif;line-height:15px;letter-spacing:0.170px;color:#f0f0f0;">Claude Sonnet 4.6</span>
<svg class="ic" style="left:1314px;top:886px" width="12" height="10" viewBox="1314 886 12 10" fill="none" ><path d="M1316.4 889.2L1320.2 893.2L1324 889.2" stroke="#b4b4b4" stroke-width="1.1"/></svg>
<svg class="ic" style="left:1340px;top:882px" width="52" height="20" viewBox="1340 882 52 20" fill="none" ><path d="M1343.4 886L1345.4 885.2L1355.8 896.6L1354.2 898.4Z" stroke="#bdbdbd" stroke-width="1" stroke-linejoin="round"/><path d="M1343 897.6L1350.6 890.2C1349.8 887.6 1351.8 885 1354.6 885.4L1352.6 887.6L1354 889L1356.2 887C1356.8 889.8 1354.2 892 1351.8 891.4L1344.4 899Z" stroke="#bdbdbd" stroke-width="1" stroke-linejoin="round" fill="#434449"/><circle cx="1381.2" cy="891.6" r="7.6" stroke="#bdbdbd" stroke-width="1.1"/><path d="M1381.2 884V891.6L1383.6 884.6" stroke="#bdbdbd" stroke-width="1" stroke-linejoin="round"/></svg>
<svg class="ic" style="left:1556px;top:876px" width="60" height="30" viewBox="1556 876 60 30" fill="none" ><circle cx="1597.8" cy="891" r="13.4" fill="#2b2c30"/><path d="M1591.2 885L1604.6 891L1591.2 897L1593.4 891ZM1593.4 891H1599" stroke="#4f8df5" stroke-width="1.2" stroke-linejoin="round"/><path d="M1566 896.4H1563.6A3.3 3.3 0 0 1 1563.2 889.9A4.8 4.8 0 0 1 1572.4 888.7A3.6 3.6 0 0 1 1575.4 892.2" stroke="#bdbdbd" stroke-width="1.1"/><path d="M1567.6 892.2L1576.4 895.6L1567.6 899.4L1569.4 895.7Z" stroke="#bdbdbd" stroke-width="0.8" stroke-linejoin="round" fill="#9a9a9a"/></svg>
</div></div>
</div></body></html>
